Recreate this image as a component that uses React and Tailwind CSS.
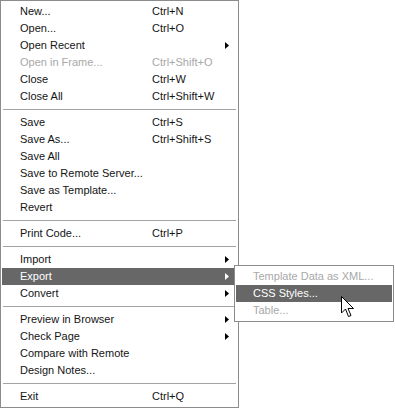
const fileMenu = [
  { label: 'New...', shortcut: 'Ctrl+N' },
  { label: 'Open...', shortcut: 'Ctrl+O' },
  { label: 'Open Recent', arrow: true },
  { label: 'Open in Frame...', shortcut: 'Ctrl+Shift+O', disabled: true },
  { label: 'Close', shortcut: 'Ctrl+W' },
  { label: 'Close All', shortcut: 'Ctrl+Shift+W' },
  'sep',
  { label: 'Save', shortcut: 'Ctrl+S' },
  { label: 'Save As...', shortcut: 'Ctrl+Shift+S' },
  { label: 'Save All' },
  { label: 'Save to Remote Server...' },
  { label: 'Save as Template...' },
  { label: 'Revert' },
  'sep',
  { label: 'Print Code...', shortcut: 'Ctrl+P' },
  'sep',
  { label: 'Import', arrow: true },
  { label: 'Export', arrow: true, active: true },
  { label: 'Convert', arrow: true },
  'sep',
  { label: 'Preview in Browser', arrow: true },
  { label: 'Check Page', arrow: true },
  { label: 'Compare with Remote' },
  { label: 'Design Notes...' },
  'sep',
  { label: 'Exit', shortcut: 'Ctrl+Q' },
]

const exportMenu = [
  { label: 'Template Data as XML...', disabled: true },
  { label: 'CSS Styles...', active: true },
  { label: 'Table...', disabled: true },
]

function Arrow({ white }) {
  return (
    <svg width="4" height="7" viewBox="0 0 4 7" className="shrink-0">
      <path d="M0 0 L4 3.5 L0 7 Z" fill={white ? '#ffffff' : '#000000'} />
    </svg>
  )
}

function Row({ item, labelWidth, padLeft }) {
  const color = item.active
    ? 'bg-[#676767] text-white'
    : item.disabled
      ? 'text-[#a8a8a8]'
      : 'text-[#141414]'
  return (
    <div className={`flex h-[17px] items-center pr-[8px] ${padLeft} ${color}`}>
      <span className={`${labelWidth} shrink-0 whitespace-nowrap`}>{item.label}</span>
      <span className="flex-1 whitespace-nowrap">{item.shortcut}</span>
      {item.arrow && <Arrow white={item.active} />}
    </div>
  )
}

export default function App() {
  return (
    <div className="relative w-[395px] h-[408px] bg-white overflow-hidden font-['Liberation_Sans',Arial,sans-serif] text-[11px] leading-none">
      {/* File menu */}
      <div className="w-[239px] h-[408px] border border-[#8c8c8c] bg-white py-[2px] px-[1px]">
        {fileMenu.map((item, i) =>
          item === 'sep' ? (
            <div key={i} className="flex h-[9px] items-center px-[1px]">
              <div className="h-px flex-1 bg-[#a3a3a3]" />
            </div>
          ) : (
            <Row key={i} item={item} labelWidth="w-[132px]" padLeft="pl-[18px]" />
          )
        )}
      </div>

      {/* Export submenu */}
      <div className="absolute left-[234px] top-[265px] w-[160px] border border-[#8c8c8c] bg-white py-[2px] px-[1px]">
        {exportMenu.map((item, i) => (
          <Row key={i} item={item} labelWidth="w-auto" padLeft="pl-[17px]" />
        ))}
      </div>

      {/* Mouse cursor */}
      <svg className="absolute left-[341px] top-[296px]" width="14" height="22" viewBox="0 0 14 22">
        <path
          d="M0.5 0.5 L0.5 17 L4.5 13 L7.5 20.5 L10 19.5 L7 12.5 L12.5 12.5 Z"
          fill="#ffffff"
          stroke="#000000"
          strokeWidth="1"
          strokeLinejoin="miter"
        />
      </svg>
    </div>
  )
}
